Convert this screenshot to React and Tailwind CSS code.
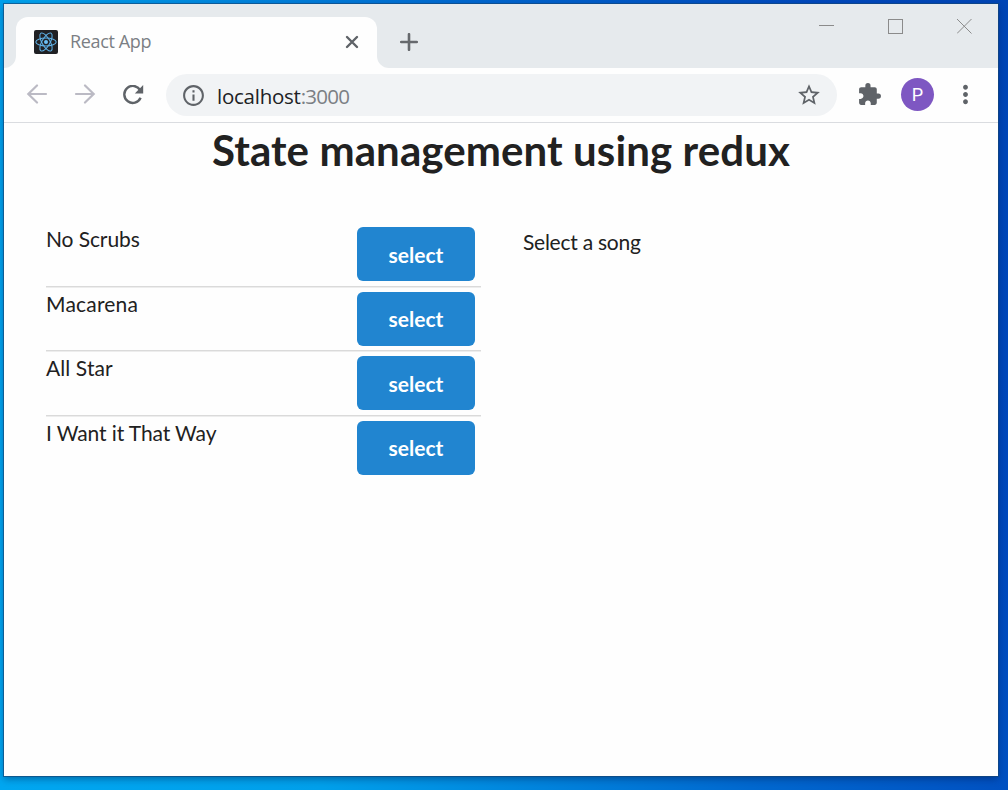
import React from "react";
import { MdInfoOutline, MdStarBorder, MdExtension, MdMoreVert } from "react-icons/md";

const songs = [
  { title: "No Scrubs", tracking: "tracking-[-0.1px]", label: "pt-px" },
  { title: "Macarena", tracking: "tracking-[0.2px]", label: "pb-px" },
  { title: "All Star", tracking: "tracking-[0.1px]", label: "pt-px" },
  { title: "I Want it That Way", tracking: "tracking-[-0.1px]", label: "pb-px" },
];

function ReactLogo() {
  return (
    <svg viewBox="0 0 24 24" className="h-6 w-6 shrink-0">
      <rect width="24" height="24" rx="2" fill="#202124" />
      <g fill="none" stroke="#5fb2e8" strokeWidth="1.05">
        <ellipse cx="12" cy="12" rx="10.2" ry="4" />
        <ellipse cx="12" cy="12" rx="10.2" ry="4" transform="rotate(60 12 12)" />
        <ellipse cx="12" cy="12" rx="10.2" ry="4" transform="rotate(120 12 12)" />
      </g>
      <circle cx="12" cy="12" r="2" fill="#6cc0f5" />
    </svg>
  );
}

function TabStrip() {
  return (
    <div className="flex h-16 shrink-0 bg-[#e6eaed]">
      <svg width="12" height="64" className="shrink-0">
        <path d="M0 64A12 12 0 0 0 12 52V64Z" fill="#fefefe" />
      </svg>
      <div className="mt-[13px] flex h-[51px] w-[361px] shrink-0 items-center rounded-t-[12px] bg-[#fefefe] pb-px pl-[18px] pr-[18px]">
        <ReactLogo />
        <span className="mb-[2px] ml-3 flex-1 whitespace-nowrap text-[18px] font-normal leading-6 tracking-[-0.35px] text-[#7b7f84]">React App</span>
        <svg width="14" height="14" viewBox="0 0 14 14" stroke="#5f6368" strokeWidth="2.4" strokeLinecap="round">
          <path d="M2 2L12 12M12 2L2 12" />
        </svg>
      </div>
      <svg width="12" height="64" className="shrink-0">
        <path d="M12 64A12 12 0 0 1 0 52V64Z" fill="#fefefe" />
      </svg>
      <svg width="18" height="18" viewBox="0 0 18 18" className="ml-[11px] mt-[29px]" stroke="#66696d" strokeWidth="2.6" strokeLinecap="round">
        <path d="M9 1.2V16.8M1.2 9H16.8" />
      </svg>
      <div className="ml-auto mr-[25px] mt-[15px] flex gap-[53px] text-[#8b8b8b]">
        <svg width="16" height="16" stroke="currentColor"><path d="M0 6.5H15" /></svg>
        <svg width="16" height="16" fill="none" stroke="currentColor"><rect x="0.5" y="0.5" width="14" height="14" /></svg>
        <svg width="16" height="16" stroke="currentColor"><path d="M0 0L14.5 14.5M14.5 0L0 14.5" /></svg>
      </div>
    </div>
  );
}

function Toolbar() {
  return (
    <div className="flex h-[55px] shrink-0 items-center border-b border-[#dadce0] bg-[#fefefe] pl-[22px]">
      <svg width="22" height="20" viewBox="0 0 22 20" fill="none" stroke="#bbbac4" strokeWidth="2.2" strokeLinecap="round" className="mb-[2px]">
        <path d="M20 10H3M11 1.5L2.3 10L11 18.5" />
      </svg>
      <svg width="22" height="20" viewBox="0 0 22 20" fill="none" stroke="#bbbac4" strokeWidth="2.2" strokeLinecap="round" className="mb-[2px] ml-[26px]">
        <path d="M2 10H19M11 1.5L19.7 10L11 18.5" />
      </svg>
      <svg width="22" height="20" viewBox="0 0 22 20" fill="none" stroke="#5f6368" strokeWidth="2.4" className="ml-[26px]">
        <path d="M18.2 5.2A8.5 8.5 0 1 0 18.6 12.8" />
        <path d="M21.2 0V8.4H12.8Z" fill="#5f6368" stroke="none" />
      </svg>
      <div className="ml-[22px] flex h-[42px] w-[671px] items-center rounded-full bg-[#f1f3f5] pl-[15px] pr-[15px]">
        <MdInfoOutline className="h-[25px] w-[25px] text-[#5f6368]" />
        <span className="ml-[11px] mt-px flex-1 text-[20.5px] leading-7 text-[#7b7f84]">
          <span className="tracking-[-0.25px] text-[#202124]">localhost</span>
          <span className="tracking-[-0.7px]">:3000</span>
        </span>
        <MdStarBorder className="h-[26px] w-[26px] text-[#5f6368]" />
      </div>
      <MdExtension className="mb-[2px] ml-5 h-[25px] w-[25px] text-[#5f6368]" />
      <div className="mb-[2px] ml-[19px] flex h-[33px] w-[33px] items-center justify-center rounded-full bg-[#7e57c2] font-['Roboto'] text-[18px] text-white">P</div>
      <MdMoreVert className="mb-[1px] ml-[17px] h-[29px] w-[29px] text-[#5f6368]" />
    </div>
  );
}

function SongList() {
  return (
    <div className="w-[435px]">
      {songs.map((song, i) => (
        <div
          key={song.title}
          className={
            "flex h-[64.5px] justify-between pr-[6px] " +
            (i > 0 ? "border-t border-[#dadada] pt-[5px] shadow-[inset_0_1px_0_#ededed]" : "pt-[5.6px]")
          }
        >
          <span className={"-mt-px text-[21px] leading-[26px] " + song.tracking}>{song.title}</span>
          <button className={"h-[54px] w-[118px] rounded-[6px] bg-[#2185d0] text-[21px] font-bold leading-[21px] text-white " + song.label}>
            select
          </button>
        </div>
      ))}
    </div>
  );
}

export default function App() {
  return (
    <div className="h-[790px] w-[1008px] overflow-hidden bg-[linear-gradient(70deg,#00a6f0_0%,#009fea_25%,#0068cf_58%,#0048bc_85%,#0045b5_100%)] pl-1 pt-1 font-['Open_Sans',sans-serif]">
      <div className="flex h-[772px] w-[994px] flex-col bg-[#fefefe] shadow-[0_0_0_1px_rgba(20,70,120,0.65),0_3px_7px_rgba(0,20,60,0.4)]">
        <TabStrip />
        <Toolbar />
        <main className="px-[42px] font-['Lato',sans-serif] text-[#212121]">
          <h1 className="text-center text-[42px] font-bold leading-[54px] tracking-[0.1px]">State management using redux</h1>
          <div className="mt-[44.4px] flex">
            <SongList />
            <div className="ml-[42px] pt-[7.6px] text-[21px] leading-[26px] tracking-[-0.25px]">Select a song</div>
          </div>
        </main>
      </div>
    </div>
  );
}
